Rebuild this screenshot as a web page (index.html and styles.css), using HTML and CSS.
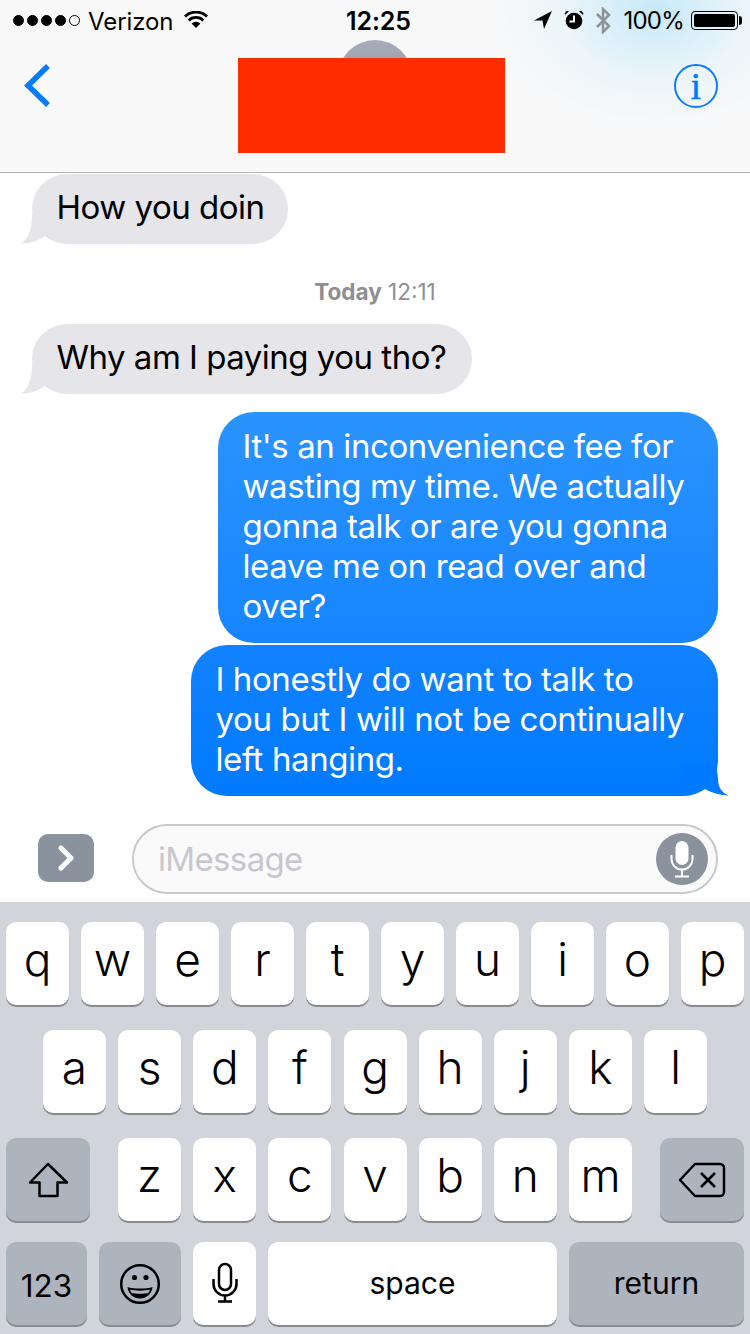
FILE: index.html
```html
<!DOCTYPE html>
<html lang="en">
<head>
<meta charset="utf-8">
<title>Messages</title>
<link rel="stylesheet" href="styles.css">
</head>
<body>
<div class="phone">
  <header class="top">
    <div class="status">
      <div class="status-left">
        <span class="signal"><i></i><i></i><i></i><i></i><i class="off"></i></span>
        <span class="carrier">Verizon</span>
        <svg class="wifi" width="24" height="17" viewBox="0 0 24 17"><path d="M12 17 7.6 12.4a6.4 6.4 0 0 1 8.8 0Z"/><path d="M5.6 10.4 3.7 8.4a12 12 0 0 1 16.6 0l-1.9 2a9.2 9.2 0 0 0-12.800 0Z"/><path d="M1.9 6.500 0 4.500a17.300 17.300 0 0 1 24 0l-1.900 2a14.500 14.500 0 0 0-20.200 0Z"/></svg>
      </div>
      <span class="clock">12:25</span>
      <div class="status-right">
        <svg class="loc" width="18" height="18" viewBox="0 0 18 18"><path d="M18 0 0 9.500 8.500 9.500 10 18Z"/></svg>
        <svg class="alarm" width="20" height="20" viewBox="0 0 20 20"><circle cx="10" cy="11" r="8.300"/><path d="M1 5 5 1.300 3 .8 .6 3ZM19 5 15 1.300 17 .8 19.400 3Z"/><path class="hand" d="M10 5.500V11.500H5.500" /></svg>
        <svg class="bt" width="16" height="27" viewBox="0 0 16 27"><path d="M2 7 14 19 8 25V2l6 6L2 20"/></svg>
        <span class="pct">100%</span>
        <span class="battery"><b></b></span>
      </div>
    </div>
    <nav class="nav">
      <svg class="back" width="28" height="46" viewBox="0 0 28 46"><path d="M25 3 5 22.500 25 42"/></svg>
      <span class="info">i</span>
    </nav>
    <div class="avatar"></div>
    <div class="redact"></div>
  </header>

  <main class="thread">
    <div class="bubble in first">How you doin
      <svg class="tail-in" width="24" height="30" viewBox="0 0 24 30"><path d="M11 0C11 14 8 25 0 29.500 10 29.500 18 26.500 24 22V0Z"/></svg>
    </div>
    <div class="stamp"><b>Today</b> 12:11</div>
    <div class="bubble in">Why am I paying you tho?
      <svg class="tail-in" width="24" height="30" viewBox="0 0 24 30"><path d="M11 0C11 14 8 25 0 29.500 10 29.500 18 26.500 24 22V0Z"/></svg>
    </div>
    <div class="bubble out upper">It's an inconvenience fee for<br>wasting my time. We actually<br>gonna talk or are you gonna<br>leave me on read over and<br>over?</div>
    <div class="bubble out lower">I honestly do want to talk to<br>you but I will not be continually<br>left hanging.
      <svg class="tail-out" width="46" height="30" viewBox="0 0 46 30"><path d="M33 0C34 4 34.800 9 35 14 35.500 22 39 27 46 29.500 37 29.500 28 26.500 22 23 16 27 9 30 0 30V0Z"/></svg>
    </div>
  </main>

  <section class="composer">
    <div class="toggle"><svg width="18" height="26" viewBox="0 0 18 26"><path d="M4 3 14 13 4 23"/></svg></div>
    <div class="field">
      <span class="placeholder">iMessage</span>
      <span class="dictate"><svg width="26" height="38" viewBox="0 0 26 38"><rect x="6.500" y="1" width="13" height="24" rx="6.500" class="cap"/><path d="M2.500 15v4a10.500 10.500 0 0 0 21 0v-4M13 30v6M6 36.500h14"/></svg></span>
    </div>
  </section>

  <section class="keyboard">
    <div class="row">
      <span class="key">q</span><span class="key">w</span><span class="key">e</span><span class="key">r</span><span class="key">t</span><span class="key">y</span><span class="key">u</span><span class="key">i</span><span class="key">o</span><span class="key">p</span>
    </div>
    <div class="row mid">
      <span class="key">a</span><span class="key">s</span><span class="key">d</span><span class="key">f</span><span class="key">g</span><span class="key">h</span><span class="key">j</span><span class="key">k</span><span class="key">l</span>
    </div>
    <div class="row third">
      <span class="key fn wide"><svg width="42" height="38" viewBox="0 0 42 38"><path d="M21 3 3 21.500H12.500V35H30.500V21.500H40Z"/></svg></span>
      <div class="letters">
        <span class="key">z</span><span class="key">x</span><span class="key">c</span><span class="key">v</span><span class="key">b</span><span class="key">n</span><span class="key">m</span>
      </div>
      <span class="key fn wide"><svg width="50" height="38" viewBox="0 0 50 38"><path d="M18 3H43a4 4 0 0 1 4 4V31a4 4 0 0 1-4 4H18L3 19ZM24 12 38 26M38 12 24 26"/></svg></span>
    </div>
    <div class="row last">
      <span class="key fn small w-num">123</span>
      <span class="key fn w-emoji"><svg width="42" height="42" viewBox="0 0 42 42"><circle cx="21" cy="21" r="18.800"/><circle class="solid" cx="15.500" cy="14.500" r="2.600"/><circle class="solid" cx="27" cy="14.500" r="2.600"/><path class="solid" d="M8.500 24C14 26 28 26 33.500 24 33 31 27 35.500 21 35.500S9 31 8.500 24Z"/><path class="teeth" d="M11 26.500C16 28 26 28 31 26.500 30.600 28 30 29 29.300 30 25 31 17 31 12.700 30 12 29 11.400 28 11 26.500Z"/></svg></span>
      <span class="key"><svg class="mic" width="28" height="42" viewBox="0 0 28 42"><rect x="8" y="2" width="12" height="26" rx="6"/><path d="M2.500 17v5a11.500 11.500 0 0 0 23 0v-5M14 33.500v5M7 39.500h14"/></svg></span>
      <span class="key small grow">space</span>
      <span class="key fn small w-return">return</span>
    </div>
  </section>
</div>
</body>
</html>
```
FILE: styles.css
```css
* { box-sizing: border-box; }

html, body {
  margin: 0;
  padding: 0;
  background: #fff;
}

.phone {
  width: 750px;
  height: 1334px;
  overflow: hidden;
  display: flex;
  flex-direction: column;
  font-family: Inter, "Liberation Sans", sans-serif;
  color: #000;
}

/* Translucent title area with the wallpaper glow at the upper right */
.top {
  position: relative;
  height: 173px;
  flex: none;
  border-bottom: 1px solid #b4b4b6;
  background:
    radial-gradient(ellipse 170px 125px at 655px 10px, rgba(190, 230, 248, .85), rgba(220, 240, 250, .45) 55%, rgba(249, 249, 249, 0) 100%),
    #f9f9f9;
}

.status {
  height: 40px;
  display: flex;
  align-items: center;
  justify-content: space-between;
  padding: 0 12px 0 13px;
  position: relative;
  z-index: 2;
}

.status-left, .status-right {
  display: flex;
  align-items: center;
}

.status-left { width: 293px; }
.status-right { width: 287px; justify-content: flex-end; }

.signal { display: flex; gap: 3px; }

.signal i {
  width: 11px;
  height: 11px;
  border-radius: 50%;
  background: #000;
  border: 1px solid #000;
}

.signal i.off { background: transparent; }

.carrier {
  font-size: 24px;
  margin-left: 8px;
  padding-top: 2px;
  letter-spacing: -.1px;
}

.wifi { margin-left: 11px; margin-top: -2px; fill: #000; }

.clock {
  font-size: 25px;
  font-weight: 600;
  letter-spacing: -.1px;
  padding-top: 1px;
}

.loc { fill: #000; margin-right: 12px; }

.alarm { margin-right: 11px; fill: #000; }
.alarm .hand { fill: none; stroke: #fff; stroke-width: 2; }

.bt { fill: none; stroke: #8e9396; stroke-width: 2.500; margin-right: 13px; }

.pct { font-size: 24px; letter-spacing: -.8px; margin-right: 7px; padding-top: 1px; }

.battery {
  width: 47px;
  height: 19px;
  border: 1px solid #000;
  border-radius: 4px;
  padding: 2px;
  position: relative;
  margin-right: 0;
}

.battery b {
  display: block;
  height: 100%;
  width: 100%;
  background: #000;
  border-radius: 2px;
}

.battery::after {
  content: "";
  position: absolute;
  right: -5px;
  top: 4px;
  width: 3px;
  height: 9px;
  background: #000;
  border-radius: 0 3px 3px 0;
}

.nav {
  display: flex;
  justify-content: space-between;
  align-items: center;
  padding: 23px 32px 0 23px;
}

.back { fill: none; stroke: #007aff; stroke-width: 5.500; }

.info {
  width: 44px;
  height: 44px;
  border: 2.500px solid #0a7dff;
  border-radius: 50%;
  display: flex;
  align-items: center;
  justify-content: center;
  font-family: "Liberation Serif", serif;
  font-weight: 400;
  font-size: 37px;
  -webkit-text-stroke: .6px #007aff;
  color: #007aff;
}

.avatar {
  position: absolute;
  left: 338px;
  top: 40px;
  width: 74px;
  height: 74px;
  border-radius: 50%;
  background: linear-gradient(#a9adb9, #858b99);
}

.redact {
  position: absolute;
  left: 238px;
  top: 58px;
  width: 267px;
  height: 95px;
  background: #ff2c00;
}

/* Conversation */
.thread {
  flex: none;
  height: 623px;
  padding-top: 1px;
  display: flex;
  flex-direction: column;
}

.bubble {
  position: relative;
  font-size: 33px;
  line-height: 40px;
  letter-spacing: -.5px;
  white-space: nowrap;
  padding: 14px 25px 16px 24.500px;
  border-radius: 36px;
}

.in {
  align-self: flex-start;
  margin-left: 32px;
  padding-top: 13px;
  padding-bottom: 17px;
  padding-right: 26px;
  background: #e5e5ea;
}

.in.first { padding-right: 24px; }

.out {
  align-self: flex-end;
  margin-right: 32px;
  color: #fff;
  letter-spacing: -.4px;
}

.upper {
  width: 500px;
  height: 231px;
  margin-top: 18px;
  background: linear-gradient(#2a93fd, #1685ff);
}

.lower {
  width: 527px;
  height: 151px;
  margin-top: 2px;
  background: linear-gradient(#1282ff, #007aff);
}

.tail-in, .tail-out {
  position: absolute;
  bottom: 0;
}

.tail-in { left: -11px; fill: #e5e5ea; }
.tail-out { right: -11px; fill: #007aff; }

.stamp {
  margin: 34px 0 19px;
  text-align: center;
  font-size: 22.500px;
  line-height: 27px;
  color: #8e8e93;
}

/* Message entry row */
.composer {
  flex: none;
  height: 106px;
  padding: 28px 32px 0 38px;
  display: flex;
  align-items: flex-start;
  gap: 38px;
}

.toggle {
  width: 56px;
  height: 48px;
  margin-top: 10px;
  flex: none;
  border-radius: 10px;
  background: #8a929e;
  display: flex;
  align-items: center;
  justify-content: center;
}

.toggle svg { fill: none; stroke: #fff; stroke-width: 5; stroke-linecap: round; stroke-linejoin: round; }

.field {
  flex: 1;
  height: 70px;
  border: 2px solid #c8c8cd;
  border-radius: 35px;
  background: #fafafa;
  display: flex;
  align-items: center;
  justify-content: space-between;
  padding: 0 8px 0 24px;
}

.placeholder { font-size: 33px; color: #c7c7cd; letter-spacing: -.65px; }

.dictate {
  width: 52px;
  height: 52px;
  border-radius: 50%;
  background: #8a929e;
  display: flex;
  align-items: center;
  justify-content: center;
}

.dictate svg { fill: none; stroke: #fff; stroke-width: 2; }
.dictate .cap { fill: #fff; stroke: none; }

/* Keyboard */
.keyboard {
  flex: 1;
  background: #d1d5db;
  padding: 20px 6px 0;
  display: flex;
  flex-direction: column;
}

.row {
  display: flex;
  gap: 12px;
  height: 83px;
  margin-bottom: 25px;
}

.row.mid { padding-left: 37px; gap: 12.130px; }
.row.third { justify-content: space-between; }
.row.last { margin-bottom: 0; margin-top: -4px; }

.letters { display: flex; gap: 12.170px; }

.key {
  width: 63px;
  height: 83px;
  flex: none;
  display: flex;
  align-items: center;
  justify-content: center;
  padding-bottom: 9px;
  background: #fff;
  border-radius: 10px;
  box-shadow: 0 2px 0 #888b90;
  font-size: 46px;
  font-weight: 300;
}

.key.small { font-size: 30px; font-weight: 400; padding-bottom: 2px; }
.key.fn { background: #adb4be; }
.key.wide { width: 84px; padding-bottom: 0; }
.w-num.small { width: 81px; font-size: 31.500px; padding-bottom: 0; padding-top: 3px; }
.w-emoji { width: 82px; padding-bottom: 0; }
.w-return { width: 175px; }
.grow { flex: 1; }
.key .mic { margin-top: 8px; }

.key svg { fill: none; stroke: #000; stroke-width: 2.500; stroke-linejoin: round; }
.key svg .solid { fill: #000; stroke: none; }
.key svg .teeth { fill: #adb4be; stroke: none; }
```
